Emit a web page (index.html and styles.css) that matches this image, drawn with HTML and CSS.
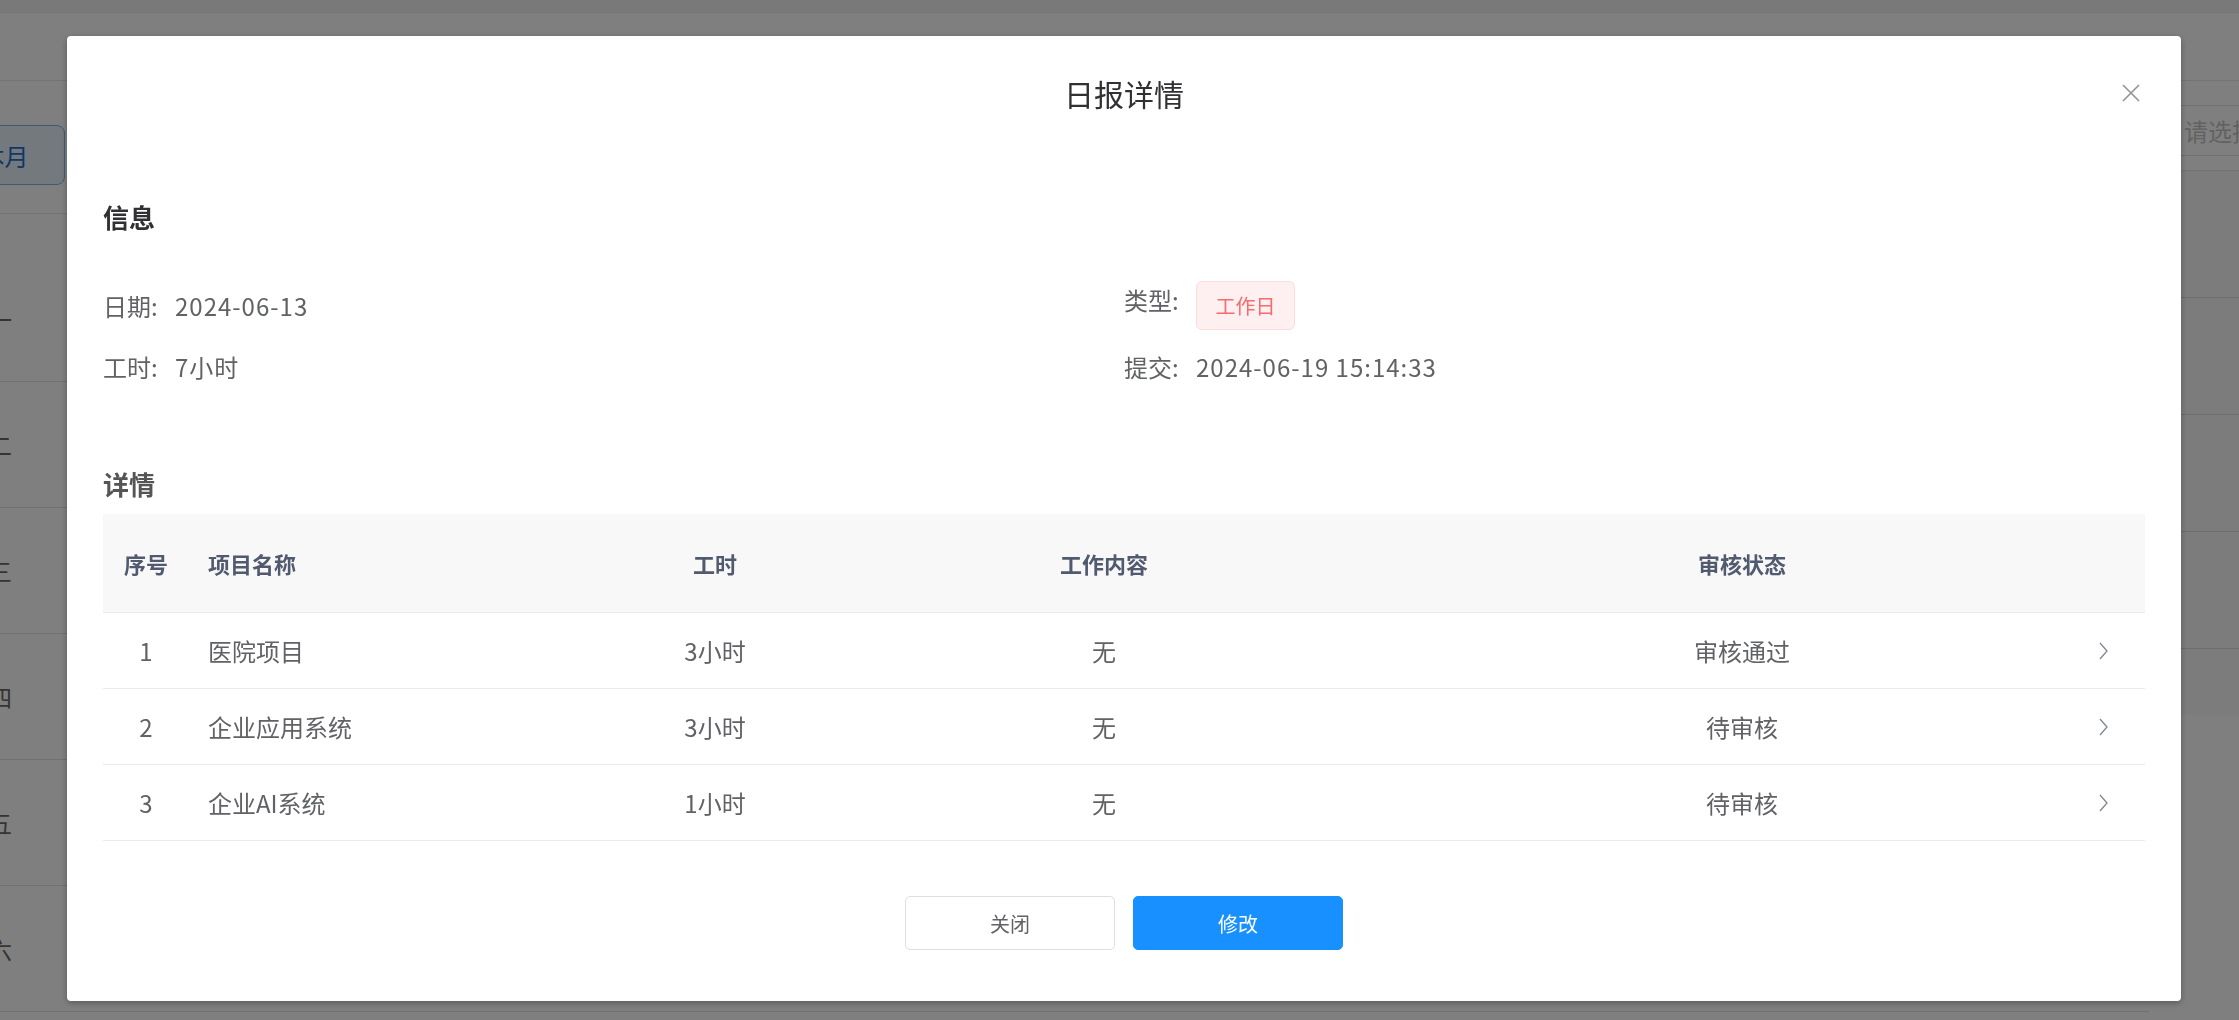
FILE: index.html
```html
<!DOCTYPE html>
<html lang="zh-CN">
<head>
<meta charset="UTF-8">
<meta name="viewport" content="width=device-width, initial-scale=1.0">
<title>日报详情</title>
<link rel="stylesheet" href="styles.css">
</head>
<body>
<!-- 背后的周报页面 -->
<div class="page">
<div class="topbar"></div>
<div class="toolbar"></div>
<div class="page-main">
<div class="calendar">
<div class="cal-tools">
<button class="month-btn">本月</button>
</div>
<div class="cal-gap"></div>
<div class="day"><span class="day-name">周一</span></div>
<div class="day"><span class="day-name">周二</span></div>
<div class="day"><span class="day-name">周三</span></div>
<div class="day"><span class="day-name">周四</span></div>
<div class="day"><span class="day-name">周五</span></div>
<div class="day"><span class="day-name">周六</span></div>
</div>
<div class="side">
<div class="side-select"><span class="placeholder">请选择</span></div>
<div class="side-list">
<div class="side-row"></div>
<div class="side-row"></div>
<div class="side-row"></div>
<div class="side-row"></div>
<div class="side-row last"></div>
</div>
</div>
</div>
</div>

<!-- 弹窗 -->
<div class="mask">
<div class="dialog">
<div class="dialog-header">
<span class="dialog-title">日报详情</span>
<button class="dialog-close" aria-label="关闭">
<svg viewBox="0 0 18 18" width="18" height="18">
<path d="M1 1 L17 17 M17 1 L1 17"/>
</svg>
</button>
</div>

<div class="dialog-body">
<h3 class="section-title">信息</h3>
<div class="info-grid">
<div class="info-item"><span class="info-label">日期:</span><span class="info-value">2024-06-13</span></div>
<div class="info-item top"><span class="info-label">类型:</span><span class="tag">工作日</span></div>
<div class="info-item"><span class="info-label">工时:</span><span class="info-value">7小时</span></div>
<div class="info-item"><span class="info-label">提交:</span><span class="info-value">2024-06-19 15:14:33</span></div>
</div>

<h3 class="section-title sub">详情</h3>
<table class="detail-table">
<colgroup>
<col class="col-no">
<col class="col-name">
<col class="col-hours">
<col class="col-content">
<col class="col-status">
<col class="col-more">
</colgroup>
<thead>
<tr>
<th>序号</th>
<th class="left">项目名称</th>
<th>工时</th>
<th>工作内容</th>
<th>审核状态</th>
<th></th>
</tr>
</thead>
<tbody>
<tr>
<td>1</td>
<td class="left">医院项目</td>
<td>3小时</td>
<td>无</td>
<td>审核通过</td>
<td><svg class="chevron" viewBox="0 0 9 18"><path d="M1 1 L8 9 L1 17"/></svg></td>
</tr>
<tr>
<td>2</td>
<td class="left">企业应用系统</td>
<td>3小时</td>
<td>无</td>
<td>待审核</td>
<td><svg class="chevron" viewBox="0 0 9 18"><path d="M1 1 L8 9 L1 17"/></svg></td>
</tr>
<tr>
<td>3</td>
<td class="left">企业AI系统</td>
<td>1小时</td>
<td>无</td>
<td>待审核</td>
<td><svg class="chevron" viewBox="0 0 9 18"><path d="M1 1 L8 9 L1 17"/></svg></td>
</tr>
</tbody>
</table>
</div>

<div class="dialog-footer">
<button class="btn">关闭</button>
<button class="btn primary">修改</button>
</div>
</div>
</div>
</body>
</html>
```

FILE: styles.css
```css
/* 页面基础 */
body {
margin: 0;
background-color: #fff;
font-family: "Noto Sans CJK SC", "Noto Sans", sans-serif;
color: #606266;
overflow: hidden;
}

/* 背后的页面 */
.page {
height: 1020px;
display: flex;
flex-direction: column;
}

.topbar {
height: 12px;
background-color: #f2f2f2;
border-bottom: 1px solid #ebebeb;
}

.toolbar {
height: 67px;
border-bottom: 1px solid #e6e6e6;
}

.page-main {
flex: 1;
display: grid;
grid-template-columns: 1fr 90px;
}

.calendar {
display: flex;
flex-direction: column;
}

.cal-tools {
height: 133px;
border-bottom: 1px solid #e6e6e6;
padding-top: 44px;
box-sizing: border-box;
}

/* 本月按钮 只露出右半 */
.month-btn {
margin-left: -56px;
width: 121px;
height: 60px;
border: 1px solid #7fb4ee;
border-radius: 8px;
background-color: #e8f2fc;
color: #1f6fd1;
font-family: inherit;
font-size: 24px;
}

.cal-gap {
height: 42px;
}

.day {
height: 125px;
border-bottom: 1px solid #e2e2e2;
display: flex;
align-items: center;
}

.day-name {
margin-left: -36px;
font-size: 24px;
color: #6a6a6a;
}

.side {
display: flex;
flex-direction: column;
}

.side-select {
margin-top: 24px;
height: 49px;
border-top: 1px solid #dcdfe6;
border-bottom: 1px solid #dcdfe6;
display: flex;
align-items: center;
padding-left: 35px;
}

.placeholder {
font-size: 24px;
color: #c4c4c4;
white-space: nowrap;
}

.side-list {
margin-top: 14px;
border-top: 1px solid #e4e4e4;
background-color: #f8f8f8;
}

.side-row {
height: 116px;
border-bottom: 1px solid #d8d8d8;
}

.side-row:first-child {
height: 126px;
}

.side-row.last {
height: 66px;
border-bottom: none;
}

/* 遮罩 */
.mask {
position: fixed;
inset: 0;
background-color: rgba(0, 0, 0, 0.5);
}

/* 弹窗 */
.dialog {
position: relative;
margin: 36px 0 0 67px;
width: 2114px;
background-color: #fff;
border-radius: 4px;
box-shadow: 0 2px 6px rgba(0, 0, 0, 0.3);
}

.dialog-header {
height: 114px;
display: flex;
justify-content: center;
align-items: center;
}

.dialog-title {
font-size: 30px;
color: #303133;
}

.dialog-close {
position: absolute;
top: 47px;
right: 40px;
width: 20px;
height: 20px;
padding: 1px;
border: none;
background: none;
}

.dialog-close svg {
display: block;
stroke: #909399;
stroke-width: 1.6;
fill: none;
}

.dialog-body {
padding: 0 36px;
}

.section-title {
margin: 50px 0 0;
font-size: 26px;
line-height: 34px;
font-weight: bold;
color: #303133;
}

.section-title.sub {
margin-top: 76px;
color: #555;
}

.info-grid {
margin-top: 47px;
display: grid;
grid-template-columns: 1fr 1fr;
grid-auto-rows: 49px;
row-gap: 12px;
}

.info-item {
display: flex;
align-items: center;
font-size: 24px;
}

.info-item.top {
align-items: flex-start;
}

.info-item.top .info-label {
line-height: 38px;
}

.info-label {
width: 72px;
flex-shrink: 0;
}

.info-value {
letter-spacing: 1px;
}

/* 工作日标签 */
.tag {
box-sizing: border-box;
width: 99px;
height: 49px;
display: flex;
align-items: center;
justify-content: center;
background-color: #fef0f0;
border: 1px solid #fcdcdc;
border-radius: 6px;
color: #f56c6c;
font-size: 20px;
}

/* 详情表格 */
.detail-table {
margin-top: 13px;
width: 100%;
table-layout: fixed;
border-collapse: collapse;
font-size: 24px;
}

.col-no { width: 86px; }
.col-name { width: 456px; }
.col-hours { width: 140px; }
.col-content { width: 638px; }
.col-status { width: 638px; }
.col-more { width: 84px; }

.detail-table th {
height: 98px;
padding: 0;
background-color: #f8f8f9;
border-bottom: 1px solid #e8eaec;
color: #515a6e;
font-size: 22px;
font-weight: bold;
text-align: center;
}

.detail-table td {
height: 75px;
padding: 0;
border-bottom: 1px solid #e8eaec;
text-align: center;
color: #606266;
}

.detail-table .left {
text-align: left;
padding-left: 19px;
}

.chevron {
display: block;
margin: 0 auto;
width: 9px;
height: 18px;
fill: none;
stroke: #808695;
stroke-width: 1.3;
}

/* 底部按钮 */
.dialog-footer {
padding: 55px 0 51px;
display: flex;
justify-content: center;
gap: 18px;
}

.btn {
width: 210px;
height: 54px;
border: 1px solid #dcdfe6;
border-radius: 5px;
background-color: #fff;
color: #606266;
font-family: inherit;
font-size: 20px;
}

.btn.primary {
background-color: #1890ff;
border-color: #1890ff;
color: #fff;
}
```
